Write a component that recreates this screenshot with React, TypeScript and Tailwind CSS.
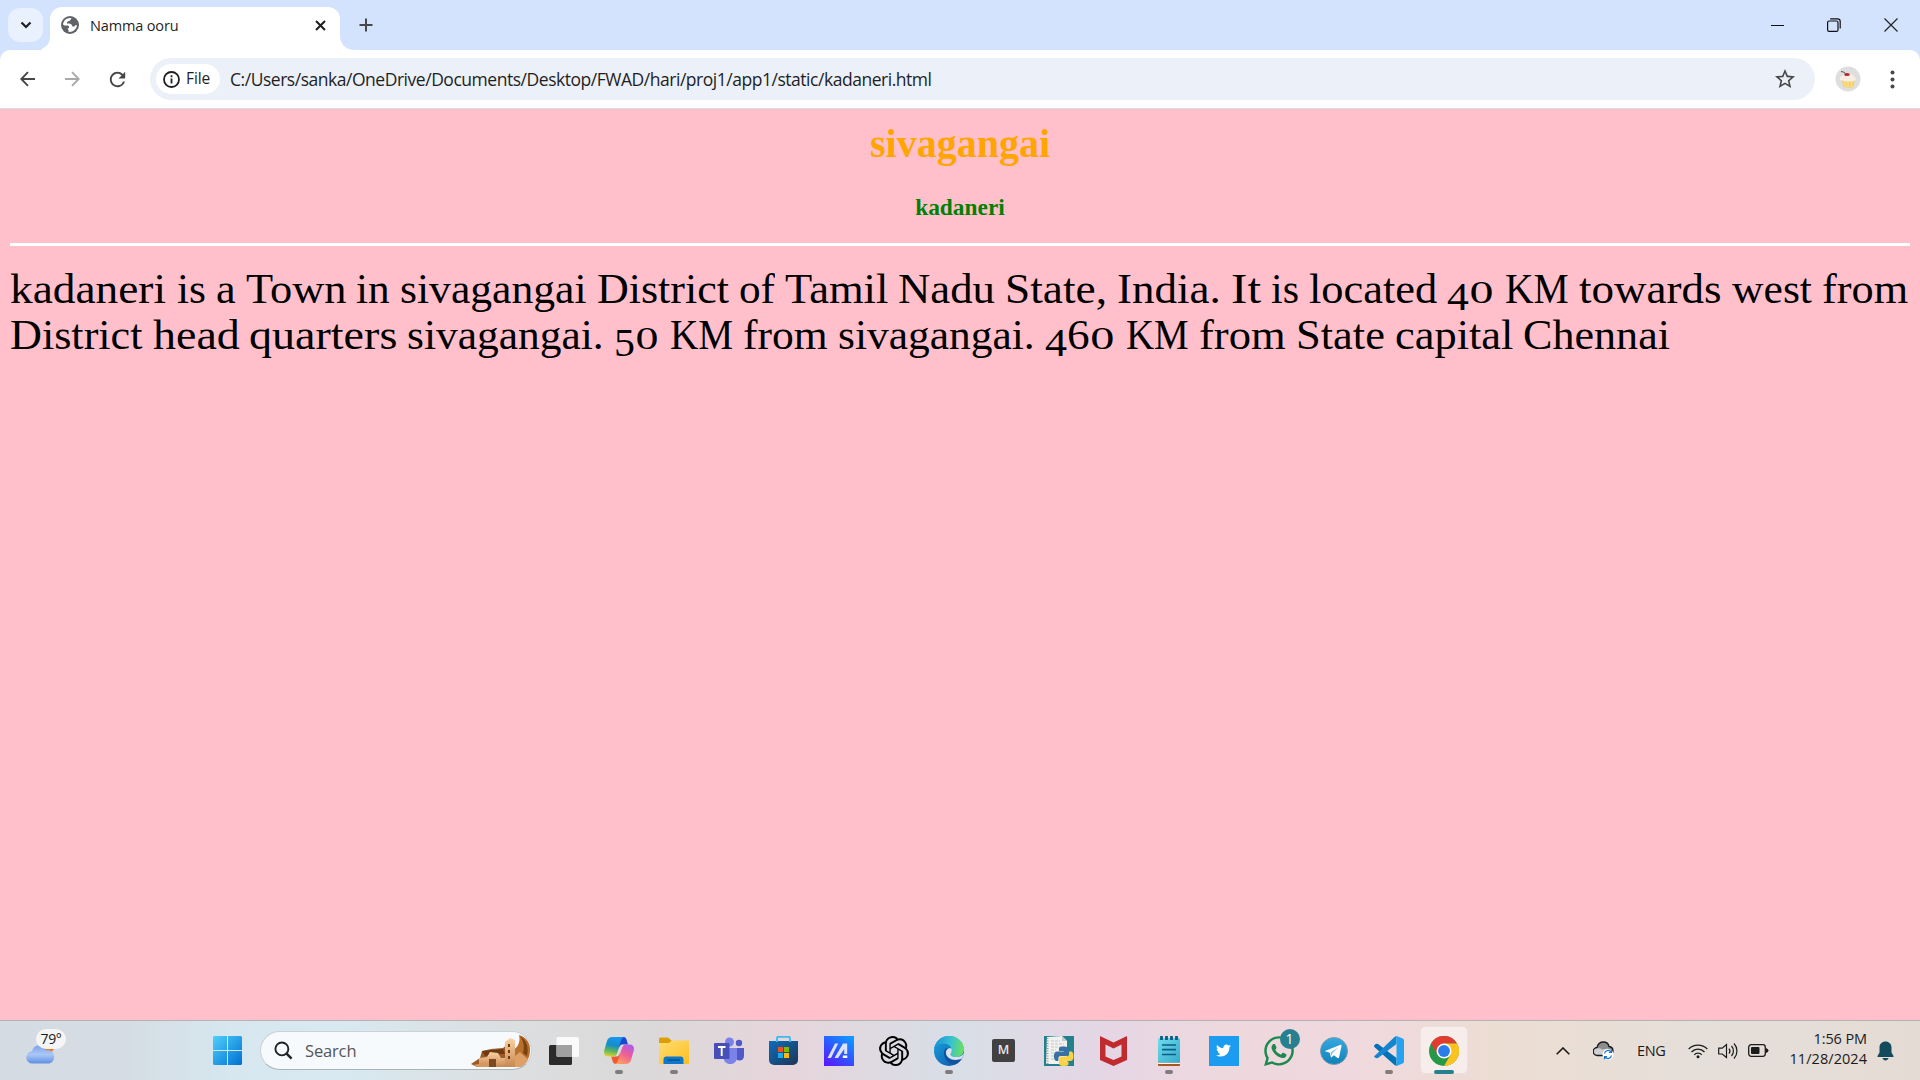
import React, { useLayoutEffect, useRef, useState } from "react";
import { MdRefresh, MdStarBorder } from "react-icons/md";
import { SiOpenai } from "react-icons/si";
import { FaTwitter, FaWhatsapp } from "react-icons/fa";

function Globe() {
  return (
    <svg width="18" height="18" viewBox="0 0 18 18">
      <circle cx="9" cy="9" r="9" fill="#5f6368" />
      <path d="M10.500 2.200C6 1.500 2.500 4.500 2 8.500L3.500 9.500H7L8 10.500V12L6.500 12.500 7.500 14V15.800C11.500 16.500 15.500 13.500 16 9.500L14.500 9 13.500 10.500H11.500L10.500 8.500 8.500 7.500H6V6L8 5 9 4.500Z" fill="#fff" />
    </svg>
  );
}

function TabStrip() {
  return (
    <div className="flex h-[50px] items-end bg-[#d3e3fd]">
      <div className="mb-2 ml-2 flex h-[34px] w-[35px] items-center justify-center rounded-xl bg-[#e9f0fe]">
        <svg width="12" height="8" viewBox="0 0 12 8" fill="none" stroke="#1f1f1f" strokeWidth="2.2">
          <path d="M1.5 1.5 6 6l4.5-4.5" />
        </svg>
      </div>
      <svg className="-ml-px" width="8" height="14" viewBox="0 0 8 14">
        <path d="M8 0v14H0V12.500C5 10.500 8 7 8 0Z" fill="#fff" />
      </svg>
      <div className="flex h-[43px] w-[290px] items-center rounded-t-[12px] bg-white pr-[14px] pb-[7px] pl-[11px]">
        <Globe />
        <span className="ml-[11px] flex-1 pt-px font-['Open_Sans'] text-[14.5px] tracking-[-0.15px] text-[#1f1f1f]">Namma ooru</span>
        <svg width="11" height="11" viewBox="0 0 11 11" stroke="#1f1f1f" strokeWidth="2">
          <path d="M1 1l9 9M10 1l-9 9" />
        </svg>
      </div>
      <svg width="15" height="14" viewBox="0 0 15 14">
        <path d="M0 0C0 8 6 14 15 14H0Z" fill="#fff" />
      </svg>
      <svg className="mb-[18px] ml-[4px]" width="14" height="14" viewBox="0 0 14 14" stroke="#474747" strokeWidth="2">
        <path d="M7 0.500v13M0.500 7h13" />
      </svg>
      <div className="ml-auto flex h-[50px] items-center">
        <svg className="mr-[43px]" width="13" height="13" viewBox="0 0 13 13" stroke="#111" fill="none">
          <path d="M0 6.500h13" />
        </svg>
        <svg className="mr-[43px]" width="14" height="14" viewBox="0 0 14 14" stroke="#111" fill="none" strokeWidth="1.200">
          <rect x="0.600" y="3" width="10.400" height="10.400" rx="1.500" />
          <path d="M3.200 0.800h7.300a2.700 2.700 0 0 1 2.700 2.700v7" />
        </svg>
        <svg className="mr-[22px]" width="14" height="14" viewBox="0 0 14 14" stroke="#222" fill="none" strokeWidth="1.200">
          <path d="M0.500 0.500l13 13M13.500 0.500l-13 13" />
        </svg>
      </div>
    </div>
  );
}

function Cupcake() {
  return (
    <svg width="26" height="26" viewBox="0 0 26 26">
      <circle cx="13" cy="13" r="12.500" fill="#dedede" />
      <path d="M6.500 13.500h13.500l-2 7.500q-5 1.500-9.500 0Z" fill="#f3d169" />
      <path d="M9.500 15l.8 6M13 15v6.500M17 15l-.8 6" stroke="#fae79b" />
      <path d="M5 13.500C4.500 11 6 10 8 9.500 9.500 7.500 12 7 13.500 7.500 17 7.500 18 9 18.500 10 21 11 21.500 13 20 14.500 16 16 9 16 5 13.500Z" fill="#f7ede4" />
      <path d="M6 5.500q4 0 5 3" stroke="#555" fill="none" />
      <ellipse cx="12" cy="8.500" rx="2.800" ry="1.500" fill="#b3272d" />
    </svg>
  );
}

function Toolbar() {
  return (
    <div className="bg-[#d3e3fd]">
      <div className="flex h-[59px] items-center rounded-t-[10px] border-b border-[#dadfe2] bg-white">
        <svg className="ml-5" width="15" height="16" viewBox="0 0 15 16" fill="none" stroke="#474747" strokeWidth="1.900">
          <path d="M15 8H1.500M8 1.200 1.300 8 8 14.800" />
        </svg>
        <svg className="ml-[30px]" width="15" height="16" viewBox="0 0 15 16" fill="none" stroke="#a9a9a9" strokeWidth="1.900">
          <path d="M0 8h13.500M7 1.200 13.700 8 7 14.800" />
        </svg>
        <MdRefresh className="ml-[26px] text-[#474747]" size={23} />
        <div className="ml-[21px] flex h-[42px] w-[1665px] items-center rounded-full bg-[#ebf0f9] pl-1.5">
          <div className="flex h-[30px] w-16 items-center rounded-full bg-white pl-[7px]">
            <svg width="17" height="17" viewBox="0 0 17 17" fill="none" stroke="#1f1f1f" strokeWidth="1.800">
              <circle cx="8.500" cy="8.500" r="7.500" />
              <path d="M8.500 7.500v5M8.500 4.300v1.900" />
            </svg>
            <span className="ml-[6px] font-['Open_Sans'] text-[15.5px] tracking-[-0.1px] text-[#1f1f1f]">File</span>
          </div>
          <span className="pt-px pl-[10px] font-['Open_Sans'] text-[17.5px] tracking-[-0.47px] whitespace-nowrap text-[#1f1f1f]">
            C:/Users/sanka/OneDrive/Documents/Desktop/FWAD/hari/proj1/app1/static/kadaneri.html
          </span>
          <MdStarBorder className="mr-[18px] ml-auto text-[#474747]" size={24} />
        </div>
        <div className="ml-5">
          <Cupcake />
        </div>
        <svg className="ml-[29px]" width="5" height="19" viewBox="0 0 5 19" fill="#474747">
          <circle cx="2.500" cy="2.500" r="2" />
          <circle cx="2.500" cy="9.500" r="2" />
          <circle cx="2.500" cy="16.500" r="2" />
        </svg>
      </div>
    </div>
  );
}

/* Old-style figures: 0 sits at x-height, 4 and 5 drop below the baseline, 6 rises. */
function Figure({ digit }: { digit: string }) {
  if (digit === "0") return <span className="inline-block w-[24px] origin-left scale-x-[1.450] text-[31px] leading-none">0</span>;
  if (digit === "6") return <span>6</span>;
  return <span className="relative top-[7px] text-[41px] leading-none">{digit}</span>;
}

/* A word stretched horizontally to the given advance width. */
function Word({ text, width }: { text: string; width: number }) {
  const ref = useRef<HTMLSpanElement>(null);
  const [scale, setScale] = useState(1.07);
  useLayoutEffect(() => {
    if (ref.current) setScale(width / ref.current.offsetWidth);
  }, [width]);
  const numeric = /^\d+$/.test(text);
  return (
    <span className="inline-block" style={{ width }}>
      <span ref={ref} className="inline-block origin-left" style={{ transform: `scaleX(${scale})` }}>
        {numeric ? text.split("").map((d, i) => <Figure key={i} digit={d} />) : text}
      </span>
    </span>
  );
}

const lines: [string, number][][] = [
  [
    ["kadaneri", 156.5], ["is", 29], ["a", 20], ["Town", 100.5], ["in", 34], ["sivagangai", 187], ["District", 132],
    ["of", 36], ["Tamil", 103], ["Nadu", 97], ["State,", 101.5], ["India.", 104], ["It", 30.5], ["is", 28], ["located", 128],
    ["40", 48], ["KM", 64], ["towards", 142.5], ["west", 80], ["from", 86.5],
  ],
  [
    ["District", 132.5], ["head", 86.5], ["quarters", 148], ["sivagangai.", 196.5], ["50", 46], ["KM", 63.5], ["from", 85],
    ["sivagangai.", 196.5], ["460", 71], ["KM", 63], ["from", 87], ["State", 89], ["capital", 118.5], ["Chennai", 147],
  ],
];

function Content() {
  return (
    <main className="h-[911px] overflow-hidden bg-[#ffc0cb] px-2.5 font-['Liberation_Serif',serif]">
      <h1 className="mt-[12px] text-center text-[40px] leading-[46px] font-bold text-[#ffa500]">sivagangai</h1>
      <h4 className="mt-[27px] text-center text-[23.4px] leading-[27px] font-bold text-[#008000]">kadaneri</h4>
      <div className="mt-[22px] h-[3px] bg-white" />
      <div className="mt-[20px] text-[42px] leading-[46px] tracking-normal whitespace-nowrap text-black">
        {lines.map((words, i) => (
          <p key={i} className="h-[46px] [word-spacing:-0.5px]">
            {words.map(([text, width], j) => (
              <React.Fragment key={j}>
                <Word text={text} width={width} />{" "}
              </React.Fragment>
            ))}
          </p>
        ))}
      </div>
    </main>
  );
}

function Weather() {
  return (
    <div className="relative ml-[26px] h-[50px] w-[44px] self-center">
      <svg className="absolute top-[7px] left-0" width="32" height="32" viewBox="0 0 34 32">
        <defs>
          <linearGradient id="cl" x1="0" y1="0" x2="0" y2="1">
            <stop offset="0" stopColor="#7ea4e8" />
            <stop offset="0.500" stopColor="#a9c8f8" />
            <stop offset="1" stopColor="#5f8fe0" />
          </linearGradient>
        </defs>
        <circle cx="23" cy="12" r="8" fill="#ef7d22" />
        <path d="M7 31.500a6.500 6.500 0 0 1-.5-13C7 14 11 11.500 15 12.500c3 .5 5 2.500 6 5 5-1 9 2 9 7 0 4-3 7-6.500 7Z" fill="url(#cl)" />
      </svg>
      <span className="absolute top-[3px] left-[10px] flex h-5 w-[30px] items-center justify-center rounded-full bg-[#f6f5f5] font-['Open_Sans'] text-[14px] tracking-[-0.3px] text-[#1b1b1b]">79°</span>
    </div>
  );
}

function StartIcon() {
  return (
    <svg width="29" height="29" viewBox="0 0 29 29">
      <defs>
        <linearGradient id="st" gradientUnits="userSpaceOnUse" x1="0" y1="0" x2="29" y2="29">
          <stop offset="0" stopColor="#4fd0fb" />
          <stop offset="1" stopColor="#0070d2" />
        </linearGradient>
      </defs>
      <path d="M1 0H14V14H0V1zM15 0H28L29 1V14H15zM0 15H14V29H1L0 28zM15 15H29V28L28 29H15z" fill="url(#st)" />
    </svg>
  );
}

function SearchBox() {
  return (
    <div className="ml-[18px] flex h-[39px] w-[272px] items-center overflow-hidden rounded-full border border-b-[#a9b4b9] border-[#c8d2d7] bg-[#f6fafc]">
      <svg className="ml-[13px]" width="19" height="19" viewBox="0 0 20 20" fill="none" stroke="#222" strokeWidth="2">
        <circle cx="8.300" cy="8.300" r="6.800" />
        <path d="M13 13l5.500 5.500" strokeWidth="2.600" />
      </svg>
      <span className="ml-[12px] pt-px font-['Open_Sans'] text-[16.5px] tracking-[-0.15px] text-[#555]">Search</span>
      <svg className="ml-auto" width="60" height="34" viewBox="0 0 60 34">
        <defs>
          <linearGradient id="sand" x1="0" y1="0" x2="0" y2="1">
            <stop offset="0" stopColor="#fad2a4" />
            <stop offset="1" stopColor="#c98850" />
          </linearGradient>
        </defs>
        <path d="M48 1C56 3 60 10 59 18 58 26 54 32 48 33H40V16C46 16 50 8 48 1Z" fill="#b9702c" />
        <path d="M49 2C56 6 58 14 56 22L52 19C54 12 52 6 49 2Z" fill="#7d4212" />
        <path d="M0 30 9 24 11 17 20 15 32 14 37 10V33H6Z" fill="#9c5a26" />
        <path d="M11 17 32 15 34 20 26 20 14 22Z" fill="#6e3a12" />
        <path d="M8 33V24l8-1 3-5 8 1 3 5h5v9Z" fill="url(#sand)" />
        <path d="M34 33V8l5-4 5 2v27Z" fill="url(#sand)" />
        <path d="M44 33V22l5-4 4 4 4 3-4 8Z" fill="#dda066" />
        <path d="M37 10h2v3h-2ZM37 16h2v3h-2ZM37 22h2v3h-2Z" fill="#6b3b16" />
        <path d="M2 31q14-4 24 2H6Z" fill="#d6985d" />
        <path d="M18 25h7v8h-7Z" fill="#7c4a20" />
      </svg>
    </div>
  );
}

function TaskView() {
  return (
    <svg width="30" height="30" viewBox="0 0 30 30">
      <rect x="0" y="9" width="23" height="20" rx="1.500" fill="#2b2b2b" />
      <rect x="7.500" y="1" width="22.500" height="20" rx="1.500" fill="#fff" fillOpacity="0.860" />
      <path d="M7.500 9H23v12H8.500l-1-1z" fill="#a0a0a0" />
    </svg>
  );
}

function Copilot() {
  return (
    <svg width="30" height="30" viewBox="0 0 30 30">
      <defs>
        <linearGradient id="c1" x1="0.400" y1="0" x2="0.200" y2="1">
          <stop offset="0" stopColor="#1597f0" />
          <stop offset="0.400" stopColor="#168dc9" />
          <stop offset="0.700" stopColor="#5db65b" />
          <stop offset="1" stopColor="#e6d52f" />
        </linearGradient>
        <linearGradient id="c2" x1="0.700" y1="0" x2="0.200" y2="1">
          <stop offset="0" stopColor="#b25be8" />
          <stop offset="0.450" stopColor="#ee5d97" />
          <stop offset="1" stopColor="#ffa45e" />
        </linearGradient>
      </defs>
      <path d="M15 1h4.500c2 0 2.800 1.500 3.300 3.500L24 8.500h-5c-3 0-3.500 2-4.500 5Z" fill="#1a49cf" />
      <path d="M15 28h-3c-2 0-3-1.500-3.600-3.500L7.200 20.500h5c2.500 0 3.500-2 4.300-5Z" fill="#ee5933" />
      <path d="M8.500 1H20c-2 .5-2.800 2.500-3.500 5l-3 10c-.8 3-2 4.500-4.500 4.500H4c-3 0-4.500-2.500-3.800-6L3 5C3.800 2.300 5.500 1 8.500 1Z" fill="url(#c1)" />
      <path d="M21.500 28H11c2-.5 2.800-2.500 3.500-5l3-9.500c.8-3 2-5 4.500-5h4c3 0 4.500 2.500 3.800 6L27 24c-.8 2.700-2.500 4-5.500 4Z" fill="url(#c2)" />
    </svg>
  );
}

function Explorer() {
  return (
    <svg width="30" height="28" viewBox="0 0 30 28">
      <defs>
        <linearGradient id="fo" x1="0" y1="0" x2="1" y2="1">
          <stop offset="0" stopColor="#ffdd70" />
          <stop offset="1" stopColor="#fcbf22" />
        </linearGradient>
      </defs>
      <path d="M0 2a1.500 1.500 0 0 1 1.500-1.500H9l4 3.500v8H0Z" fill="#dd9f07" />
      <path d="M0 6h10l3-2.500h17V27H0Z" fill="url(#fo)" />
      <path d="M4.500 27v-4.500a3 3 0 0 1 3-3h14a3 3 0 0 1 3 3V27Z" fill="#0f78cb" />
      <path d="M8.500 23h12.500" stroke="#09508d" strokeWidth="1.400" />
    </svg>
  );
}

function Teams() {
  return (
    <svg width="30" height="28" viewBox="0 0 30 28">
      <circle cx="15.500" cy="5" r="4.500" fill="#7b83eb" />
      <circle cx="25" cy="6" r="3.200" fill="#5059c9" />
      <path d="M21 11h9v8c0 3-2 4.500-4.500 4.500S21 22 21 19Z" fill="#5059c9" />
      <path d="M9 11h14v9c0 4.500-3 7-6.500 7S10 25 9.500 21Z" fill="#7b83eb" />
      <rect x="0" y="6" width="15.500" height="16" rx="1" fill="#474fb8" />
      <path d="M4 10h7.500M7.700 10v9" stroke="#fff" strokeWidth="1.900" />
    </svg>
  );
}

function Store() {
  return (
    <svg width="29" height="29" viewBox="0 0 29 29">
      <defs>
        <linearGradient id="so" x1="0" y1="0" x2="1" y2="1">
          <stop offset="0" stopColor="#0c6dbd" />
          <stop offset="1" stopColor="#1f3553" />
        </linearGradient>
      </defs>
      <path d="M0 5h29v19a5 5 0 0 1-5 5H5a5 5 0 0 1-5-5Z" fill="url(#so)" />
      <path d="M8 6V2a1.200 1.200 0 0 1 1.200-1.200h10.600A1.200 1.200 0 0 1 21 2v4" fill="none" stroke="#35bdf0" strokeWidth="1.800" />
      <path d="M9 11h5v5H9z" fill="#f25022" />
      <path d="M15 11h5v5h-5z" fill="#7fba00" />
      <path d="M9 17h5v5H9z" fill="#19a9ee" />
      <path d="M15 17h5v5h-5z" fill="#ffb900" />
    </svg>
  );
}

function MyAsus() {
  return (
    <svg width="30" height="30" viewBox="0 0 30 30">
      <defs>
        <linearGradient id="ma" x1="0.100" y1="1" x2="0.800" y2="0">
          <stop offset="0" stopColor="#5a19ff" />
          <stop offset="0.500" stopColor="#2f55ff" />
          <stop offset="1" stopColor="#0f97ff" />
        </linearGradient>
      </defs>
      <path d="M0 0h30v30H0z" fill="url(#ma)" />
      <path d="M3.500 22 11 7.500h3.200L7 22ZM10.500 22 19 7.500h4.200V18h-3v-5L14 22Z" fill="#dbe3ff" />
      <path d="M18.800 19.500h4.500V22h-4.500z" fill="#fff" />
    </svg>
  );
}

function Edge() {
  return (
    <svg width="30" height="30" viewBox="0 0 30 30">
      <defs>
        <linearGradient id="e1" x1="0" y1="0.400" x2="1" y2="0.500">
          <stop offset="0" stopColor="#1a8fd8" />
          <stop offset="0.550" stopColor="#35c3d0" />
          <stop offset="1" stopColor="#6fe05a" />
        </linearGradient>
        <linearGradient id="e2" x1="0" y1="0" x2="1" y2="1">
          <stop offset="0" stopColor="#1aa5e0" />
          <stop offset="1" stopColor="#0d4fa4" />
        </linearGradient>
      </defs>
      <circle cx="15" cy="15" r="15" fill="url(#e2)" />
      <path d="M0 14C.5 6 7 0 15 0c9 0 15 6.500 15 13 0 5-3.500 8-8 8-3.500 0-5.500-1.200-5.500-2.500 0-1 1.300-1.500 1.300-4C17.800 10.500 14 7.500 9.500 7.500 5 7.500 1 10.500 0 14Z" fill="url(#e1)" />
      <path d="M10.500 14c-2 6 2 14 10 14.500 3.500-1 6-3.500 7.500-6-7 3.500-15 1-16-4-.3-2 .5-4.500 3-6-2-.5-4 0-4.500 1.500Z" fill="#12519f" />
      <path d="M17.500 12.500c-3-1-6 1-5.500 5 .8 5 8 8.500 16 5l1.500-3.500L30 17c-2 3-4.800 4-8 4-3.500 0-5.500-1.200-5.500-2.500 0-1 1.300-1.500 1.300-4Z" fill="#dbe3ea" />
    </svg>
  );
}

function Idle() {
  return (
    <svg width="30" height="30" viewBox="0 0 30 30">
      <path d="M0 0h30v30H0z" fill="#23808c" />
      <path d="M3 1l15-1 5 5v23H2Z" fill="#f1f1ef" />
      <path d="M18 0v5h5Z" fill="#c3c8c8" />
      <path d="M3.500 2v26" stroke="#999" strokeWidth="2" strokeDasharray="1 1.500" />
      <path d="M7 5h9M7 8h13M7 11h13M7 14h5M7 17h4M7 20h4M7 23h4" stroke="#c5c8ca" strokeDasharray="3 1" />
      <g transform="translate(10 10.500) scale(0.810)">
        <path fill="#3a71a4" d="M14.250.18l.9.2.73.26.59.3.45.32.34.34.25.34.16.33.1.3.04.26.02.2-.01.13V8.500l-.05.63-.13.55-.21.46-.26.38-.3.31-.33.25-.35.19-.35.14-.33.1-.3.07-.26.04-.21.02H8.770l-.69.05-.59.14-.5.22-.41.27-.33.32-.27.35-.2.36-.15.37-.1.35-.07.32-.04.27-.02.21v3.060H3.170l-.21-.03-.28-.07-.32-.12-.35-.18-.36-.26-.36-.36-.35-.46-.32-.59-.28-.73-.21-.88-.14-1.050-.05-1.230.06-1.220.16-1.040.24-.87.32-.71.36-.57.4-.44.42-.33.42-.24.4-.16.36-.1.32-.05.24-.01h.16l.06.01h8.160v-.83H6.180l-.01-2.750-.02-.37.05-.34.11-.31.17-.28.25-.26.31-.23.38-.2.44-.18.51-.15.58-.12.64-.1.71-.06.77-.04.84-.02 1.270.05z" />
        <path fill="#fbd244" d="M21.100 6.110l.28.06.32.12.35.18.36.27.36.35.35.47.32.59.28.73.21.88.14 1.040.05 1.230-.06 1.230-.16 1.040-.24.86-.32.71-.36.57-.4.45-.42.33-.42.24-.4.16-.36.09-.32.05-.24.02-.16-.01h-8.220v.82h5.840l.01 2.760.02.36-.05.34-.11.31-.17.29-.25.25-.31.24-.38.2-.44.17-.51.15-.58.13-.64.09-.71.07-.77.04-.84.01-1.270-.04-1.070-.14-.9-.2-.73-.25-.59-.3-.45-.33-.34-.34-.25-.34-.16-.33-.1-.3-.04-.25-.02-.2.01-.13v-5.340l.05-.64.13-.54.21-.46.26-.38.3-.32.33-.24.35-.2.35-.14.33-.1.3-.06.26-.04.21-.02.13-.01h5.840l.69-.05.59-.14.5-.21.41-.28.33-.32.27-.35.2-.36.15-.36.1-.35.07-.32.04-.28.02-.21V6.070h2.090z" />
      </g>
    </svg>
  );
}

function McAfee() {
  return (
    <svg width="27" height="30" viewBox="0 0 27 30">
      <path d="M0 0 13.500 6.500 27 0V24L13.500 30 0 24ZM5.500 8.500V20.500L13.500 24 21.500 20.500V8.500L13.500 12.500Z" fill="#c02b2f" fillRule="evenodd" />
    </svg>
  );
}

function Notepad() {
  return (
    <svg width="22" height="30" viewBox="0 0 22 30">
      <defs>
        <linearGradient id="np" x1="0" y1="0" x2="1" y2="1">
          <stop offset="0" stopColor="#6fdcee" />
          <stop offset="1" stopColor="#36aacb" />
        </linearGradient>
      </defs>
      <path d="M0 24h22v5a1 1 0 0 1-1 1H1a1 1 0 0 1-1-1Z" fill="#a4581d" />
      <path d="M0 26.500h22V28H0Z" fill="#f5f5f5" />
      <rect y="2" width="22" height="24.500" rx="1.500" fill="url(#np)" />
      <path d="M4 9h14M4 13.700h14M4 18.500h14" stroke="#0b5e85" strokeWidth="1.700" />
      <path d="M3.500 0v4M8.500 0v4M13.500 0v4M18.500 0v4" stroke="#0b5e85" strokeWidth="2.800" />
    </svg>
  );
}

function WhatsApp() {
  return (
    <div className="relative">
      <FaWhatsapp size={34} color="#1a8a4f" />
      <span className="absolute -top-[5px] left-[18px] flex size-5 items-center justify-center rounded-full bg-[#27808f] font-['Open_Sans'] text-[14px] text-white">1</span>
    </div>
  );
}

function Telegram() {
  return (
    <svg width="28" height="28" viewBox="0 0 28 28">
      <defs>
        <linearGradient id="tg" x1="0" y1="0" x2="0" y2="1">
          <stop offset="0" stopColor="#35a9e0" />
          <stop offset="1" stopColor="#1280bb" />
        </linearGradient>
      </defs>
      <circle cx="14" cy="14" r="13.500" fill="url(#tg)" stroke="#7b9bad" />
      <path d="M5.500 13.800 20.500 7.800C21.300 7.600 21.700 8.200 21.500 9l-2.400 11.200c-.2.900-.8 1.100-1.500.7l-3.700-2.700-2 1.900c-.6.500-1 .3-1.100-.4l-1-4-4.200-1.200c-.6-.2-.6-.5-.1-.7Z" fill="#fff" />
      <path d="M10.500 15.500 18.500 10.500 12 16.800l-.4 2.800Z" fill="#8cc1df" />
    </svg>
  );
}

function VsCode() {
  return (
    <svg width="30" height="30" viewBox="0 0 30 30">
      <path d="M0 9.500 2 7.800 4 8 22.500 22v7.500L20.500 29 .3 11Z" fill="#0072b8" />
      <path d="M0 20.500 20.500 1 22.500.5V8L4 22l-2 .2Z" fill="#1485cf" />
      <path d="M20 1 22.500 0 28.600 2.500a2 2 0 0 1 1.400 2v21a2 2 0 0 1-1.400 2L22.500 30 20 29c1.500.8 2.500 0 2.500-1.500v-25C22.500 1 21.500.2 20 1Z" fill="#26a3f0" />
    </svg>
  );
}

function Chrome() {
  return (
    <svg width="30" height="30" viewBox="0 0 48 48">
      <circle cx="24" cy="24" r="24" fill="#279847" />
      <path d="M24 24 13.600 30 3.200 12A24 24 0 0 1 44.800 12H24Z" fill="#e33b2e" />
      <path d="M24 12h20.800A24 24 0 0 1 24 48l10.400-18Z" fill="#fcc31e" />
      <circle cx="24" cy="24" r="12" fill="#fff" />
      <circle cx="24" cy="24" r="9.500" fill="#2a7de9" />
    </svg>
  );
}

const apps: { icon: React.ReactNode; open?: boolean; active?: boolean }[] = [
  { icon: <TaskView /> },
  { icon: <Copilot />, open: true },
  { icon: <Explorer />, open: true },
  { icon: <Teams /> },
  { icon: <Store /> },
  { icon: <MyAsus /> },
  { icon: <SiOpenai size={30} color="#000" /> },
  { icon: <Edge />, open: true },
  {
    icon: (
      <span className="flex size-[23px] items-center justify-center rounded-[2px] bg-[#414141] font-['Open_Sans'] text-[12.5px] font-semibold text-[#e8e8e8]">M</span>
    ),
  },
  { icon: <Idle /> },
  { icon: <McAfee /> },
  { icon: <Notepad />, open: true },
  {
    icon: (
      <span className="flex size-[30px] items-center justify-center bg-[#1c9cf0]">
        <FaTwitter size={15} color="#fff" />
      </span>
    ),
  },
  { icon: <WhatsApp /> },
  { icon: <Telegram /> },
  { icon: <VsCode />, open: true },
  { icon: <Chrome />, active: true },
];

function Tray() {
  return (
    <div className="ml-auto flex items-center font-['Open_Sans'] text-[#1b1b1b]">
      <svg width="14" height="8" viewBox="0 0 14 8" fill="none" stroke="#1b1b1b" strokeWidth="1.600">
        <path d="M0.700 7.300 7 1l6.300 6.300" />
      </svg>
      <svg className="ml-[23px]" width="21" height="19" viewBox="0 0 21 19">
        <path d="M4.500 14.500a4 4 0 0 1-.5-8C5 2.500 8 1 10.500 1c3 0 5 2 5.500 4.500 2.500.3 4 2 4 4.500 0 2.500-2 4.500-4 4.500Z" fill="#8d8d8d" stroke="#1b1b1b" strokeWidth="1.300" />
        <path d="M4 13.500a3 3 0 0 1 0-6c2-.5 4 0 5 1l6-1v6Z" fill="#d0d0d0" />
        <circle cx="15" cy="13.500" r="5.500" fill="#fff" />
        <path d="M11.500 12.500a3.700 3.700 0 0 1 6.500-1.700M18.500 14.500a3.700 3.700 0 0 1-6.500 1.700M18.500 8.800v2.600h-2.600M11.500 18.200v-2.600h2.600" fill="none" stroke="#1a78ce" strokeWidth="1.300" />
      </svg>
      <span className="ml-[23px] w-[30px] text-[14.5px] tracking-[-0.4px]">ENG</span>
      <svg className="ml-[21px]" width="20" height="16" viewBox="0 0 20 16" fill="none" stroke="#1b1b1b" strokeWidth="1.300">
        <path d="M0.700 6a13 13 0 0 1 18.600 0M3.500 9a9 9 0 0 1 13 0M6.300 11.700a5.200 5.200 0 0 1 7.400 0" />
        <circle cx="10" cy="13.700" r="1.500" fill="#1b1b1b" stroke="none" />
      </svg>
      <svg className="ml-[10px]" width="21" height="18" viewBox="0 0 21 18" fill="none" stroke="#1b1b1b" strokeWidth="1.200">
        <path d="M0.700 6.200h3.500L8.500 2.500v13L4.200 12H0.700ZM11 6.500a4 4 0 0 1 0 5M13.500 4a7.500 7.500 0 0 1 0 10M16 1.500a11 11 0 0 1 0 15" />
      </svg>
      <svg className="ml-[9px]" width="21" height="13" viewBox="0 0 21 13">
        <rect x="0.700" y="0.700" width="16.600" height="11.600" rx="2.500" fill="none" stroke="#1b1b1b" strokeWidth="1.300" />
        <rect x="3" y="3" width="8.500" height="7" rx="1" fill="#1b1b1b" />
        <path d="M18 4q2.500 1 2.500 2.500T18 9Z" fill="#1b1b1b" />
      </svg>
      <div className="ml-[20px] flex w-[78px] flex-col items-end pb-[3px] text-[14.5px] leading-5 whitespace-nowrap">
        <div className="tracking-[-0.1px]">1:56 PM</div>
        <div className="tracking-[0.05px]">11/28/2024</div>
      </div>
      <svg className="mr-[26px] ml-[10px]" width="17" height="20" viewBox="0 0 17 20" fill="#124c5c">
        <path d="M8.500 0.500C12 .5 14.500 3 14.500 6.500v5L16.500 15v1H.5v-1l2-3.500v-5C2.500 3 5 .5 8.500.5ZM5.500 17h6c-.3 1.500-1.500 2.500-3 2.500s-2.700-1-3-2.500Z" />
      </svg>
    </div>
  );
}

function Taskbar() {
  return (
    <div className="flex h-[60px] items-center border-t border-[#b5b3b2] bg-[linear-gradient(90deg,#d5dbe2_0px,#d5dce3_120px,#d6e7ef_230px,#d8e9f1_340px,#dcdedf_520px,#dbd9d9_640px,#e6d5db_790px,#dcdbe3_900px,#d8dee7_960px,#e6d6e5_1110px,#edd8dd_1220px,#f0d9de_1350px,#ecddd3_1500px,#e5dfd9_1700px,#e5dbd5_1920px)]">
      <Weather />
      <div className="ml-[143px]">
        <StartIcon />
      </div>
      <SearchBox />
      <div className="ml-[4px] flex h-full">
        {apps.map((a, i) => (
          <div key={i} className="relative flex h-full w-[55px] items-center justify-center">
            {a.active && <div className="absolute top-[5px] left-[4px] h-[48px] w-[48px] rounded-[5px] border border-[#ecdfdc] bg-[#f7eeec]" />}
            <div className="relative">{a.icon}</div>
            {a.open && <div className="absolute bottom-[6px] left-[24px] h-1 w-2 rounded-full bg-[#807b7c]" />}
            {a.active && <div className="absolute bottom-[6px] left-[18px] h-1 w-5 rounded-full bg-[#27808f]" />}
          </div>
        ))}
      </div>
      <Tray />
    </div>
  );
}

export default function App() {
  return (
    <div className="h-[1080px] w-[1920px] overflow-hidden">
      <TabStrip />
      <Toolbar />
      <Content />
      <Taskbar />
    </div>
  );
}
